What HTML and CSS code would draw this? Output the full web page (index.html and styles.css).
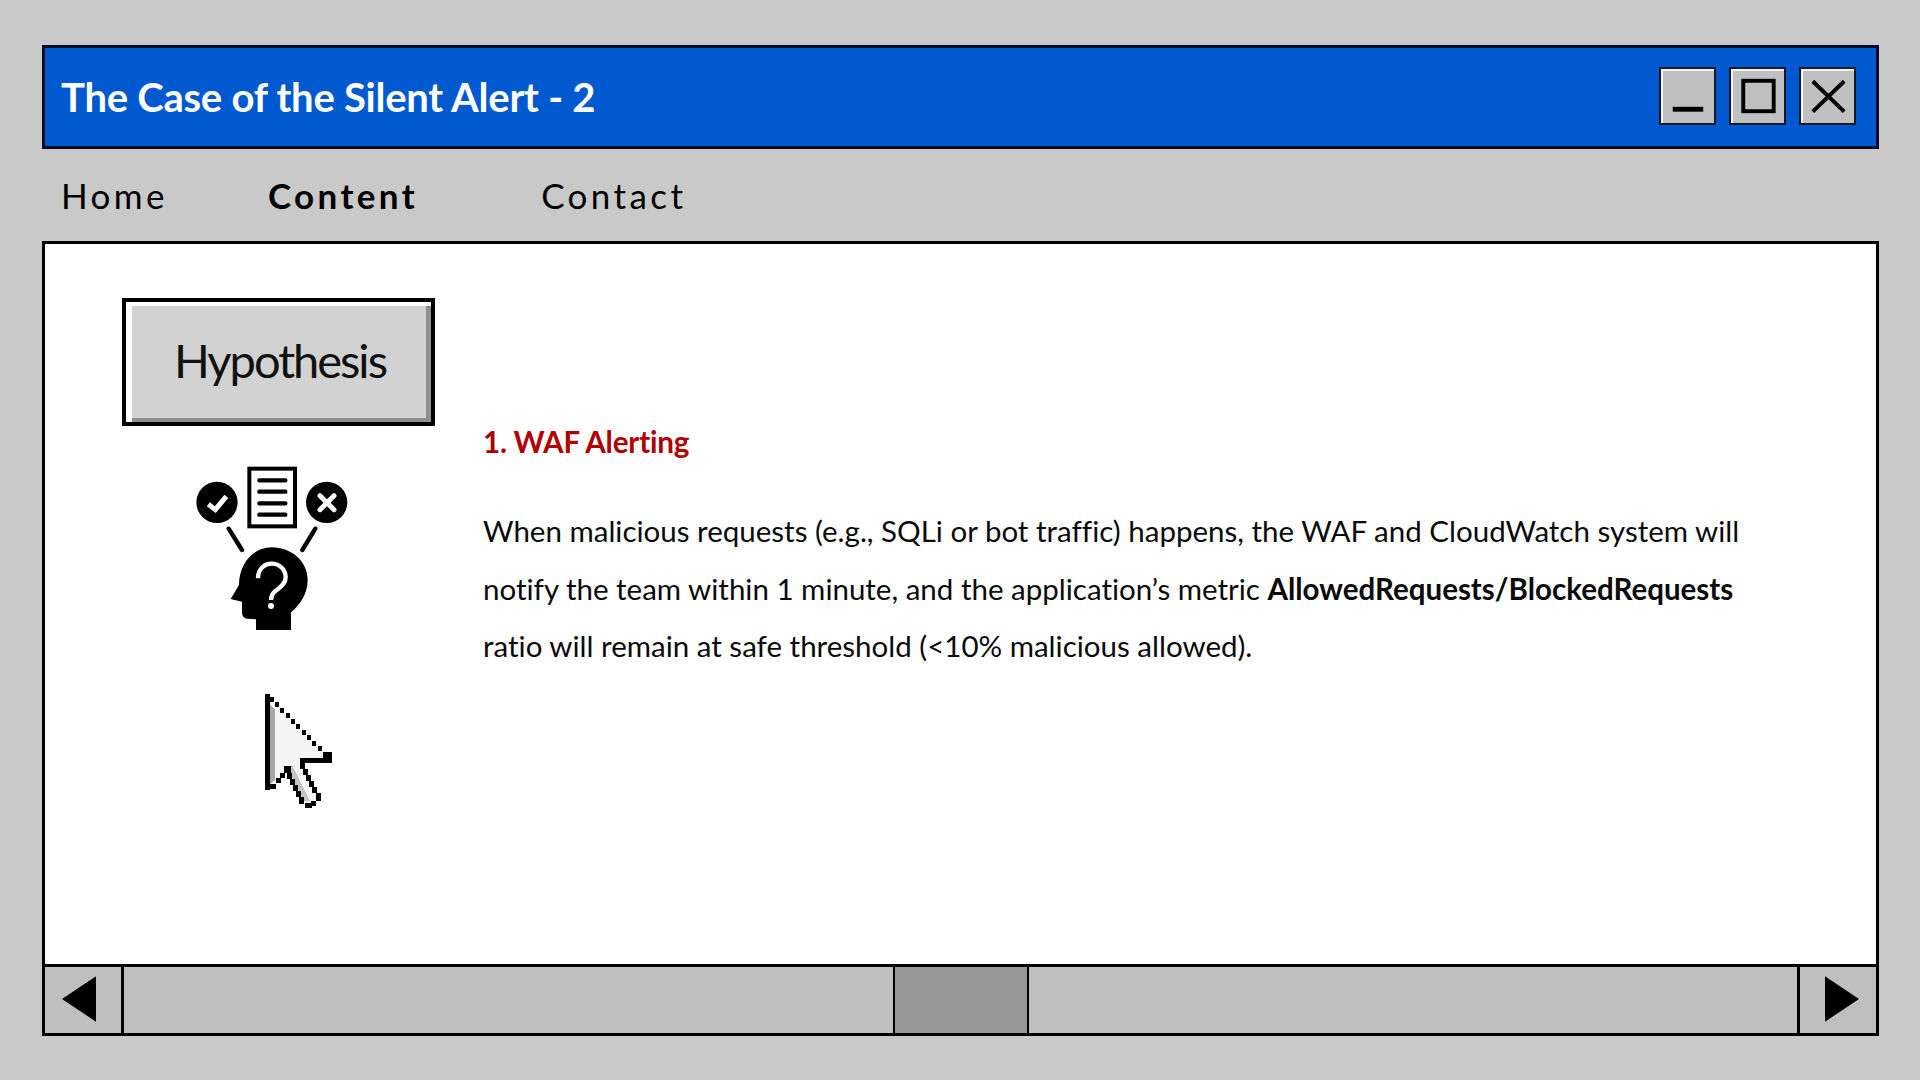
FILE: index.html
```html
<!DOCTYPE html>
<html lang="en">
<head>
    <meta charset="UTF-8">
    <title>The Case of the Silent Alert - 2</title>
    <link rel="stylesheet" href="styles.css">
</head>
<body>

<header class="titlebar">
    <h1 class="title">The Case of the Silent Alert - 2</h1>
    <div class="win-buttons">
        <div class="win-btn">
            <svg width="53" height="54" viewBox="0 0 54 54"><rect x="12" y="38" width="31" height="5"/></svg>
        </div>
        <div class="win-btn">
            <svg width="53" height="54" viewBox="0 0 54 54"><rect x="12.5" y="11.5" width="31" height="31" fill="none" stroke="#000" stroke-width="4"/></svg>
        </div>
        <div class="win-btn">
            <svg width="53" height="54" viewBox="0 0 54 54"><path d="M12 12L44 43M44 12L12 43" fill="none" stroke="#000" stroke-width="4"/></svg>
        </div>
    </div>
</header>

<nav class="menu">
    <a href="#" class="menu-home">Home</a>
    <a href="#" class="menu-content active">Content</a>
    <a href="#" class="menu-contact">Contact</a>
</nav>

<div class="window">
    <main class="main">
        <div class="side">
            <div class="hypothesis">Hypothesis</div>
            <svg class="think-icon" width="190" height="190" viewBox="0 0 570 570">
                <rect x="208" y="56" width="137" height="173" fill="#fff" stroke="#000" stroke-width="12"/>
                <path d="M238 91H316M238 125H316M238 160H316M238 194H316" stroke="#000" stroke-width="13" stroke-linecap="round"/>
                <circle cx="111" cy="157" r="62"/>
                <path d="M85 163L106 179L139 139" fill="none" stroke="#fff" stroke-width="15"/>
                <circle cx="440" cy="157" r="62"/>
                <path d="M420 137L462 179M462 137L420 179" fill="none" stroke="#fff" stroke-width="15" stroke-linecap="round"/>
                <path d="M146 236L186 300M406 236L367 300" stroke="#000" stroke-width="13" stroke-linecap="round"/>
                <path d="M228 540L228 508L202 506C190 504 186 496 186 485L186 455L152 447L177 405C177 340 220 292 275 292C335 292 383 335 383 390C383 430 360 465 333 487L333 540Z"/>
                <path d="M234 385C234 355 255 341 275 341C300 341 317 360 317 382C317 405 296 414 284 425C276 432 273 440 273 450" fill="none" stroke="#fff" stroke-width="13"/>
                <circle cx="273" cy="468" r="9" fill="#fff"/>
            </svg>
            <svg class="cursor" width="100" height="140" viewBox="0 0 100 140" shape-rendering="crispEdges">
                <path d="M18 16L80 78L52 78L70 118L58 124L38 86L18 108Z" fill="#f4f4f4"/>
                <path d="M20 24L25 29L25 98L20 104Z" fill="#a6a6a6"/>
                <path d="M36 86L42 84L60 120L54 120Z" fill="#c4c4c4"/>
                <rect x="15" y="13" width="5" height="96"/>
                <path d="M20 16h4v5h-4zM25 21h4v5h-4zM30 27h4v5h-4zM36 32h4v5h-4zM41 38h4v5h-4zM46 43h4v5h-4zM52 49h4v5h-4zM57 54h4v5h-4zM62 60h4v5h-4zM68 65h4v5h-4zM73 71h9v6h-9z"/>
                <rect x="50" y="77" width="32" height="5"/>
                <path d="M50 82h5v6h-5zM53 88h5v6h-5zM56 94h5v6h-5zM59 100h5v6h-5zM62 106h5v6h-5zM66 112h5v8h-5zM61 120h5v5h-5zM55 122h7v5h-7z"/>
                <path d="M49 116h5v7h-5zM46 110h5v6h-5zM43 104h5v6h-5zM40 98h5v6h-5zM37 92h5v6h-5zM34 85h7v7h-7z"/>
                <path d="M20 103h6v5h-6zM26 97h5v5h-5zM30 92h5v5h-5z"/>
            </svg>
        </div>
        <div class="text">
            <h2 class="section-title">1. WAF Alerting</h2>
            <p class="body-text">When malicious requests (e.g., SQLi or bot traffic) happens, the WAF and CloudWatch system will<br>
            notify the team within 1 minute, and the application’s metric <b>AllowedRequests/BlockedRequests</b><br>
            ratio will remain at safe threshold (&lt;10% malicious allowed).</p>
        </div>
    </main>
    <div class="scrollbar">
        <div class="arrow arrow-left">
            <svg width="35" height="48" viewBox="0 0 34 46"><path d="M1 23L34 1V45Z"/></svg>
        </div>
        <div class="track">
            <div class="thumb"></div>
        </div>
        <div class="arrow arrow-right">
            <svg width="35" height="48" viewBox="0 0 34 46"><path d="M33 23L0 1V45Z"/></svg>
        </div>
    </div>
</div>

</body>
</html>
```

FILE: styles.css
```css
body {
    margin: 0;
    width: 1920px;
    height: 1080px;
    overflow: hidden;
    box-sizing: border-box;
    padding: 45px 41px 0 42px;
    background-color: #c9c9c9;
    font-family: Lato, "Open Sans", sans-serif;
    font-variant-ligatures: none;
    color: #000;
}
.titlebar {
    display: flex;
    align-items: center;
    justify-content: space-between;
    height: 104px;
    box-sizing: border-box;
    padding: 0 20px 2px 16px;
    background-color: #0059cf;
    border: 3px solid #000c26;
}
.title {
    margin: 0;
    padding-top: 2px;
    font-size: 40px;
    font-weight: 700;
    letter-spacing: -0.25px;
    color: white;
}
.win-buttons {
    display: flex;
    gap: 13px;
}
.win-btn {
    width: 53px;
    height: 54px;
    border: 2px solid #10182c;
    margin: -1px 0;
    background-color: #c0c0c0;
    box-shadow: inset 2px 2px 0 #f2f2f2;
}
.win-btn svg {
    display: block;
}
.menu {
    display: flex;
    align-items: center;
    height: 92px;
    box-sizing: border-box;
    font-size: 35px;
    letter-spacing: 3.4px;
}
.menu a {
    color: black;
    text-decoration: none;
}
.menu a.active {
    font-weight: 700;
}
.menu-home {
    margin-left: 19px;
}
.menu-content {
    margin-left: 100px;
}
.menu-contact {
    margin-left: 123px;
}
.window {
    display: flex;
    flex-direction: column;
    height: 795px;
    box-sizing: border-box;
    background-color: white;
    border: 3px solid #000;
}
.main {
    flex: 1;
    display: flex;
    padding: 54px 0 0 77px;
}
.side {
    width: 313px;
    flex-shrink: 0;
}
.hypothesis {
    width: 313px;
    height: 128px;
    box-sizing: border-box;
    display: flex;
    align-items: center;
    justify-content: center;
    padding: 0 0 4px 3px;
    background-color: #d2d2d2;
    border: 4px solid #000;
    box-shadow: inset 6px 4px 0 #fff, inset -5px -4px 0 #8f8f8f;
    font-size: 47px;
    letter-spacing: -2px;
    color: #111;
}
.think-icon {
    display: block;
    margin: 24px 0 0 58px;
}
.cursor {
    display: block;
    margin: 41px 0 0 128px;
}
.text {
    margin-left: 48px;
    padding-top: 127px;
}
.section-title {
    margin: 0;
    font-size: 29.6px;
    line-height: 34px;
    font-weight: 700;
    letter-spacing: -0.2px;
    color: #b00000;
}
.body-text {
    margin: 43px 0 0;
    font-size: 29.5px;
    line-height: 57.5px;
    white-space: nowrap;
    color: #0a0a0a;
}
.scrollbar {
    display: flex;
    height: 69px;
    flex-shrink: 0;
    box-sizing: border-box;
    background-color: #bfbfbf;
    border-top: 3px solid #000;
}
.arrow {
    width: 76px;
    flex-shrink: 0;
    display: flex;
    align-items: center;
    justify-content: center;
}
.arrow-left {
    border-right: 3px solid #000;
}
.arrow-left svg {
    margin: 0 9px 2px 0;
}
.arrow-right {
    border-left: 3px solid #000;
}
.arrow-right svg {
    margin: 0 0 2px 8px;
}
.track {
    flex: 1;
    display: flex;
    justify-content: center;
}
.thumb {
    width: 136px;
    box-sizing: border-box;
    background-color: #969696;
    border-left: 2px solid #000;
    border-right: 2px solid #000;
}
```
